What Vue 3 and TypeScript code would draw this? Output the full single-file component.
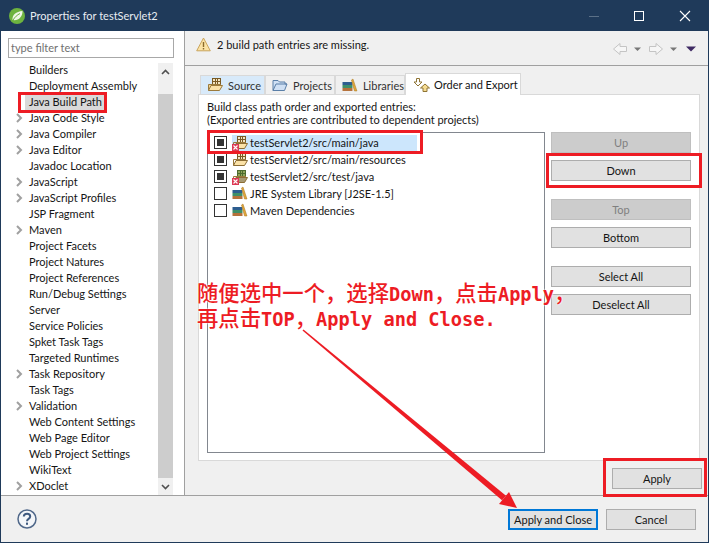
<script setup lang="ts">
interface TreeItem {
  label: string
  more?: boolean
  selected?: boolean
}

const treeItems: TreeItem[] = [
  { label: 'Builders' },
  { label: 'Deployment Assembly' },
  { label: 'Java Build Path', selected: true },
  { label: 'Java Code Style', more: true },
  { label: 'Java Compiler', more: true },
  { label: 'Java Editor', more: true },
  { label: 'Javadoc Location' },
  { label: 'JavaScript', more: true },
  { label: 'JavaScript Profiles', more: true },
  { label: 'JSP Fragment' },
  { label: 'Maven', more: true },
  { label: 'Project Facets' },
  { label: 'Project Natures' },
  { label: 'Project References' },
  { label: 'Run/Debug Settings' },
  { label: 'Server' },
  { label: 'Service Policies' },
  { label: 'Spket Task Tags' },
  { label: 'Targeted Runtimes' },
  { label: 'Task Repository', more: true },
  { label: 'Task Tags' },
  { label: 'Validation', more: true },
  { label: 'Web Content Settings' },
  { label: 'Web Page Editor' },
  { label: 'Web Project Settings' },
  { label: 'WikiText' },
  { label: 'XDoclet', more: true }
]

const tabs = [
  { label: 'Source', icon: 'source' },
  { label: 'Projects', icon: 'projects' },
  { label: 'Libraries', icon: 'libs' }
]

const entries = [
  { label: 'testServlet2/src/main/java', checked: true, icon: 'folder', error: true, selected: true },
  { label: 'testServlet2/src/main/resources', checked: true, icon: 'folder', error: false, selected: false },
  { label: 'testServlet2/src/test/java', checked: true, icon: 'testfolder', error: true, selected: false },
  { label: 'JRE System Library [J2SE-1.5]', checked: false, icon: 'libs', error: false, selected: false },
  { label: 'Maven Dependencies', checked: false, icon: 'libs', error: false, selected: false }
]

const sideButtons = [
  { label: 'Up', disabled: true, cls: 'b-up' },
  { label: 'Down', disabled: false, cls: 'b-down' },
  { label: 'Top', disabled: true, cls: 'b-top' },
  { label: 'Bottom', disabled: false, cls: 'b-bottom' },
  { label: 'Select All', disabled: false, cls: 'b-all' },
  { label: 'Deselect All', disabled: false, cls: 'b-none' }
]
</script>

<template>
  <div class="window">
    <!-- title bar -->
    <header class="titlebar">
      <svg class="logo" width="16" height="16" viewBox="0 0 16 16">
        <circle cx="8" cy="8" r="8" fill="#6db33f" />
        <path d="M3.500 12C3 7 7 3.500 13.500 3 13.500 9 9.500 13 3.500 12Z" fill="#eef6e6" />
        <path d="M4 12C6 9 8 7 11 5.500" stroke="#6db33f" fill="none" />
      </svg>
      <span class="title">Properties for testServlet2</span>
      <svg class="winbtn" width="102" height="14" viewBox="0 0 102 14">
        <path d="M0 7.500H10" stroke="#5b7087" />
        <rect x="45.500" y="2.500" width="9" height="9" fill="none" stroke="#fff" />
        <path d="M91 2L101 12M101 2L91 12" stroke="#fff" stroke-width="1.100" />
      </svg>
    </header>

    <div class="main">
      <!-- left tree -->
      <aside class="left">
        <div class="filter">type filter text</div>
        <div class="tree-wrap">
          <ul class="tree">
            <li v-for="item in treeItems" :key="item.label" class="tree-row">
              <svg v-if="item.more" class="chev" width="7" height="10" viewBox="0 0 7 10">
                <path d="M1 1L5 5L1 9" fill="none" stroke="#a0a0a0" stroke-width="2" />
              </svg>
              <span class="tree-label" :class="{ sel: item.selected }">{{ item.label }}</span>
            </li>
          </ul>
          <div class="scrollbar">
            <div class="sb-btn">
              <svg width="9" height="6" viewBox="0 0 9 6"><path d="M1 5L4.500 1.500L8 5" fill="none" stroke="#505050" stroke-width="1.600" /></svg>
            </div>
            <div class="sb-thumb"></div>
            <div class="sb-btn">
              <svg width="9" height="6" viewBox="0 0 9 6"><path d="M1 1L4.500 4.500L8 1" fill="none" stroke="#505050" stroke-width="1.600" /></svg>
            </div>
          </div>
        </div>
      </aside>

      <!-- right page -->
      <section class="right">
        <div class="message">
          <svg width="15" height="15" viewBox="0 0 15 15">
            <path d="M7.500 1L14.300 13.800H.7Z" fill="#fbe3a6" stroke="#c9a45c" stroke-linejoin="round" />
            <path d="M7.500 5V10M7.500 11V12.500" stroke="#8a6a2a" stroke-width="1.400" />
          </svg>
          <span class="msg-text">2 build path entries are missing.</span>
          <svg class="nav" width="83" height="14" viewBox="0 0 83 14">
            <path d="M.5 7L7 1.500V4.500H13.500V9.500H7V12.500Z" fill="#f6f6f6" stroke="#c4c4c4" />
            <path d="M21 5.500H28L24.500 9Z" fill="#777" />
            <path d="M49.500 7L43 1.500V4.500H36.500V9.500H43V12.500Z" fill="#f6f6f6" stroke="#c4c4c4" />
            <path d="M57 5.500H64L60.500 9Z" fill="#777" />
            <path d="M73 4.500H83L78 9.500Z" fill="#3f2a63" />
          </svg>
        </div>

        <div class="page">
          <div class="tabbar">
            <div v-for="tab in tabs" :key="tab.label" class="tab" :class="'tab-' + tab.icon">
              <svg v-if="tab.icon === 'source'" width="16" height="14" viewBox="0 0 16 14">
                <rect x="5.500" y="0.500" width="8" height="6" fill="#f3e6c4" stroke="#7a5a24" />
                <path d="M5.500 3.500H13.500M8.500 .5V6.500M10.500 .5V6.500" stroke="#7a5a24" />
                <path d="M1.500 12.500V6.500H14" fill="#f0d28e" stroke="#9b7a3c" />
                <path d="M1.500 12.500L4 7.500H15.500L12.500 12.500Z" fill="#fbe2a8" stroke="#9b7a3c" />
              </svg>
              <svg v-else-if="tab.icon === 'projects'" width="16" height="14" viewBox="0 0 16 14">
                <path d="M1 12.500V2.500H6L7.500 4H13V6H15L12.500 12.500Z" fill="#cfe0f4" stroke="#5a7fa8" />
                <path d="M1 12.500L4 6H15" fill="none" stroke="#5a7fa8" />
              </svg>
              <svg v-else width="16" height="14" viewBox="0 0 16 14">
                <rect x="0.500" y="10" width="10" height="3" fill="#b5713a" />
                <rect x="0.500" y="7" width="10" height="3" fill="#3f8f68" />
                <rect x="0.500" y="4" width="10" height="3" fill="#2d5d8f" />
                <path d="M11 1L15 13H12.500L9.500 2Z" fill="#e0a63c" stroke="#a67720" stroke-width=".5" />
              </svg>
              <span>{{ tab.label }}</span>
            </div>
            <div class="tab active">
              <svg width="17" height="14" viewBox="0 0 17 14">
                <path d="M3.500 .5H6.500V4H9L5 8L1 4H3.500Z" fill="#fff" stroke="#8f7434" />
                <path d="M12 6L16.500 10H14V13.500H10V10H7.500Z" fill="#f6dc92" stroke="#8f7434" />
              </svg>
              <span>Order and Export</span>
            </div>
          </div>

          <div class="tabpanel">
            <p class="desc">Build class path order and exported entries:<br />(Exported entries are contributed to dependent projects)</p>
            <div class="panel-body">
              <div class="listbox">
                <div v-for="entry in entries" :key="entry.label" class="entry">
                  <span class="check"><span v-if="entry.checked" class="check-fill"></span></span>
                  <span class="entry-main" :class="{ 'entry-sel': entry.selected }">
                    <span class="entry-icon">
                      <svg v-if="entry.icon === 'libs'" width="16" height="14" viewBox="0 0 16 14">
                        <rect x="0.500" y="10" width="10" height="3" fill="#b5713a" />
                        <rect x="0.500" y="7" width="10" height="3" fill="#3f8f68" />
                        <rect x="0.500" y="4" width="10" height="3" fill="#2d5d8f" />
                        <path d="M11 1L15 13H12.500L9.500 2Z" fill="#e0a63c" stroke="#a67720" stroke-width=".5" />
                      </svg>
                      <svg v-else width="16" height="15" viewBox="0 0 16 15">
                        <rect x="5.500" y="1.500" width="8" height="6" :fill="entry.icon === 'folder' ? '#f3e6c4' : '#8fa55a'" :stroke="entry.icon === 'folder' ? '#7a5a24' : '#4d6a2e'" />
                        <path d="M5.500 4.500H13.500M8.500 1.500V7.500M10.500 1.500V7.500" :stroke="entry.icon === 'folder' ? '#7a5a24' : '#4d6a2e'" />
                        <path d="M1.500 13.500V7.500H14" fill="none" stroke="#9b7a3c" />
                        <path d="M1.500 13.500L4 8.500H15.500L12.500 13.500Z" :fill="entry.icon === 'folder' ? '#fbe2a8' : '#a89a72'" stroke="#8b6d35" />
                      </svg>
                      <svg v-if="entry.error" class="err" width="7" height="7" viewBox="0 0 7 7">
                        <rect width="7" height="7" fill="#dc3a55" />
                        <path d="M1.500 1.500L5.500 5.500M5.500 1.500L1.500 5.500" stroke="#fff" stroke-width="1.100" />
                      </svg>
                    </span>
                    <span class="entry-label">{{ entry.label }}</span>
                  </span>
                </div>
              </div>
              <div class="side">
                <button v-for="b in sideButtons" :key="b.label" class="btn side-btn" :class="[b.cls, { disabled: b.disabled }]">{{ b.label }}</button>
              </div>
            </div>
          </div>
          <div class="apply-row">
            <button class="btn apply">Apply</button>
          </div>
        </div>
      </section>
    </div>

    <!-- bottom bar -->
    <footer class="footer">
      <svg width="20" height="20" viewBox="0 0 20 20">
        <circle cx="10" cy="10" r="9" fill="#f4f6f9" stroke="#50688a" stroke-width="1.500" />
        <path d="M6.800 7.500C7 3.800 13.200 3.800 13.200 7.500C13.200 10 10 9.800 10 12.200" fill="none" stroke="#3f5a80" stroke-width="2" />
        <rect x="9" y="13.600" width="2" height="2.200" fill="#3f5a80" />
      </svg>
      <div class="footer-btns">
        <button class="btn primary">Apply and Close</button>
        <button class="btn cancel">Cancel</button>
      </div>
    </footer>

    <!-- red annotations drawn over the screenshot -->
    <div class="mark m-path"></div>
    <div class="mark m-entry"></div>
    <div class="mark m-down"></div>
    <div class="mark m-apply"></div>
    <div class="note">
      <div class="note-line"><span class="cjk">随便选中一个，选择</span>Down<span class="cjk">，点击</span>Apply<span class="cjk">，</span></div>
      <div class="note-line"><span class="cjk">再点击</span>TOP<span class="cjk">，</span>Apply and Close.</div>
    </div>
    <svg class="arrow" width="240" height="200" viewBox="0 0 240 200">
      <path d="M12.500 10.500L13.500 9.500L216 175.700L212 180.300Z" fill="#ed1c24" />
      <path d="M227 188L209 184L219 172Z" fill="#ed1c24" />
    </svg>
  </div>
</template>

<style scoped>
.window {
  position: relative;
  width: 709px;
  height: 543px;
  box-sizing: border-box;
  display: flex;
  flex-direction: column;
  background: #f0f0f0;
  border: 1px solid #1f3a5a;
  border-top: 0;
  font-family: Lato, "Noto Sans", sans-serif;
  font-size: 11px;
  color: #151515;
  overflow: hidden;
}

.titlebar {
  height: 31px;
  flex-shrink: 0;
  margin: 0 -1px;
  background: #1f3a5a;
  color: #fff;
  display: flex;
  align-items: center;
  padding-left: 9px;
  gap: 5px;
}

.title {
  font-size: 11px;
  color: #e8edf2;
}

.winbtn {
  margin-left: auto;
  margin-right: 18px;
}

.main {
  flex: 1;
  display: flex;
  min-height: 0;
}

.left {
  width: 183px;
  flex-shrink: 0;
  background: #fff;
  padding: 7px 0 0 7px;
  box-sizing: border-box;
  display: flex;
  flex-direction: column;
}

.filter {
  width: 166px;
  height: 20px;
  box-sizing: border-box;
  border: 1px solid #a8a8a8;
  padding-left: 2px;
  line-height: 18px;
  font-size: 11px;
  color: #707070;
}

.tree-wrap {
  display: flex;
  margin-top: 4px;
  flex: 1;
  min-height: 0;
}

.tree {
  list-style: none;
  margin: 0;
  padding: 0;
  width: 150px;
}

.tree-row {
  position: relative;
  height: 16px;
  line-height: 16px;
  padding-left: 21px;
  white-space: nowrap;
}

.chev {
  position: absolute;
  left: 8px;
  top: 3px;
}

.tree-label {
  display: inline-block;
}

.tree-label.sel {
  background: #d9d9d9;
  margin-left: -4px;
  padding: 0 3px 0 4px;
}

.scrollbar {
  width: 15px;
  margin-top: 1px;
  background: #f0f0f0;
  display: flex;
  flex-direction: column;
}

.sb-btn {
  height: 17px;
  display: flex;
  align-items: center;
  justify-content: center;
  flex-shrink: 0;
}

.sb-thumb {
  flex: 1;
  margin-top: 14px;
  background: #cdcdcd;
}

.right {
  flex: 1;
  min-width: 0;
  border-left: 1px solid #a0a0a0;
  display: flex;
  flex-direction: column;
}

.message {
  height: 35px;
  flex-shrink: 0;
  display: flex;
  align-items: center;
  padding: 0 12px 7px 11px;
  box-sizing: border-box;
  border-bottom: 1px solid #a0a0a0;
  gap: 6px;
}

.nav {
  margin-left: auto;
  margin-top: 8px;
}

.page {
  flex: 1;
  padding: 7px 8px 0 13px;
  display: flex;
  flex-direction: column;
  min-height: 0;
}

.tabbar {
  display: flex;
  align-items: flex-end;
  height: 21px;
  flex-shrink: 0;
  padding-left: 2px;
}

.tab {
  height: 19px;
  display: flex;
  align-items: center;
  gap: 5px;
  padding: 0 0 0 6px;
  box-sizing: border-box;
  background: #f0f0f0;
  border: 1px solid #d9d9d9;
  border-bottom: 0;
  color: #333;
}

.tab-source {
  width: 65px;
  background: #d8eafa;
}

.tab-projects {
  width: 70px;
}

.tab-libs {
  width: 70px;
}

.tab.active {
  width: 116px;
  height: 22px;
  background: #fff;
  margin-bottom: -1px;
  position: relative;
  padding: 0 0 0 7px;
  gap: 4px;
  color: #151515;
  z-index: 1;
}

.tabpanel {
  flex: none;
  height: 367px;
  background: #fff;
  border: 1px solid #d9d9d9;
  box-sizing: border-box;
  padding: 5px 8px;
  display: flex;
  flex-direction: column;
}

.desc {
  margin: 0 0 6px;
  line-height: 13px;
}

.panel-body {
  display: flex;
  flex: 1;
  min-height: 0;
  gap: 6px;
}

.listbox {
  width: 338px;
  height: 321px;
  flex-shrink: 0;
  box-sizing: border-box;
  border: 1px solid #82878f;
  padding: 1px 0 0 6px;
}

.entry {
  height: 17px;
  display: flex;
  align-items: center;
}

.check {
  width: 13px;
  height: 13px;
  box-sizing: border-box;
  border: 1px solid #333;
  background: #fff;
  display: flex;
  align-items: center;
  justify-content: center;
  flex-shrink: 0;
}

.check-fill {
  width: 7px;
  height: 7px;
  background: #333;
}

.entry-main {
  display: flex;
  align-items: center;
  height: 16px;
  margin-left: 5px;
}

.entry-sel {
  width: 185px;
  background: #cce6fc;
}

.entry-icon {
  position: relative;
  width: 16px;
  height: 15px;
  flex-shrink: 0;
}

.err {
  position: absolute;
  left: 0;
  bottom: -1px;
}

.entry-label {
  padding-left: 2px;
  line-height: 16px;
  white-space: nowrap;
}

.side {
  display: flex;
  flex-direction: column;
  width: 142px;
}

.btn {
  font: inherit;
  color: #151515;
  background: #e1e1e1;
  border: 1px solid #adadad;
  border-radius: 0;
  padding: 0;
  box-sizing: border-box;
}

.side-btn {
  height: 21px;
  flex-shrink: 0;
}

.b-down {
  margin-top: 7px;
}

.b-top {
  margin-top: 18px;
}

.b-bottom {
  margin-top: 7px;
}

.b-all {
  margin-top: 18px;
}

.b-none {
  margin-top: 7px;
}

.disabled {
  background: #cccccc;
  color: #7f7f7f;
  border-color: #bfbfbf;
}

.apply-row {
  flex: 1;
  display: flex;
  justify-content: flex-end;
  align-items: flex-start;
  padding-top: 7px;
}

.apply {
  width: 90px;
  height: 21px;
  margin-right: -2px;
}

.footer {
  height: 47px;
  flex-shrink: 0;
  border-top: 1px solid #a0a0a0;
  background: #f0f0f0;
  display: flex;
  align-items: center;
  padding: 0 12px 0 16px;
  box-sizing: border-box;
}

.footer-btns {
  margin-left: auto;
  display: flex;
  gap: 8px;
}

.primary {
  width: 90px;
  height: 21px;
  border: 2px solid #0078d7;
}

.cancel {
  width: 90px;
  height: 21px;
}

.mark {
  position: absolute;
  border: 3px solid #ed1c24;
  box-sizing: border-box;
}

.m-path {
  left: 17px;
  top: 92px;
  width: 89px;
  height: 21px;
}

.m-entry {
  left: 206px;
  top: 130px;
  width: 216px;
  height: 24px;
}

.m-down {
  left: 545px;
  top: 153px;
  width: 156px;
  height: 35px;
}

.m-apply {
  left: 602px;
  top: 458px;
  width: 104px;
  height: 39px;
}

.note {
  position: absolute;
  left: 196px;
  top: 281px;
  font-family: "DejaVu Sans Mono", monospace;
  font-weight: 700;
  font-size: 18.67px;
  color: #ed1c24;
  white-space: nowrap;
  text-shadow: 0 0 2px #fff, 0 0 2px #fff;
}

.note-line {
  height: 25px;
  line-height: 25px;
  overflow: visible;
}

.cjk {
  display: inline-block;
  font-family: "Noto Sans CJK SC", sans-serif;
  font-weight: 500;
  font-size: 21.33px;
  line-height: 22px;
  height: 22px;
}

.arrow {
  position: absolute;
  left: 289px;
  top: 320px;
}
</style>

<style>
html,
body {
  margin: 0;
  background: #f0f0f0;
}
</style>
